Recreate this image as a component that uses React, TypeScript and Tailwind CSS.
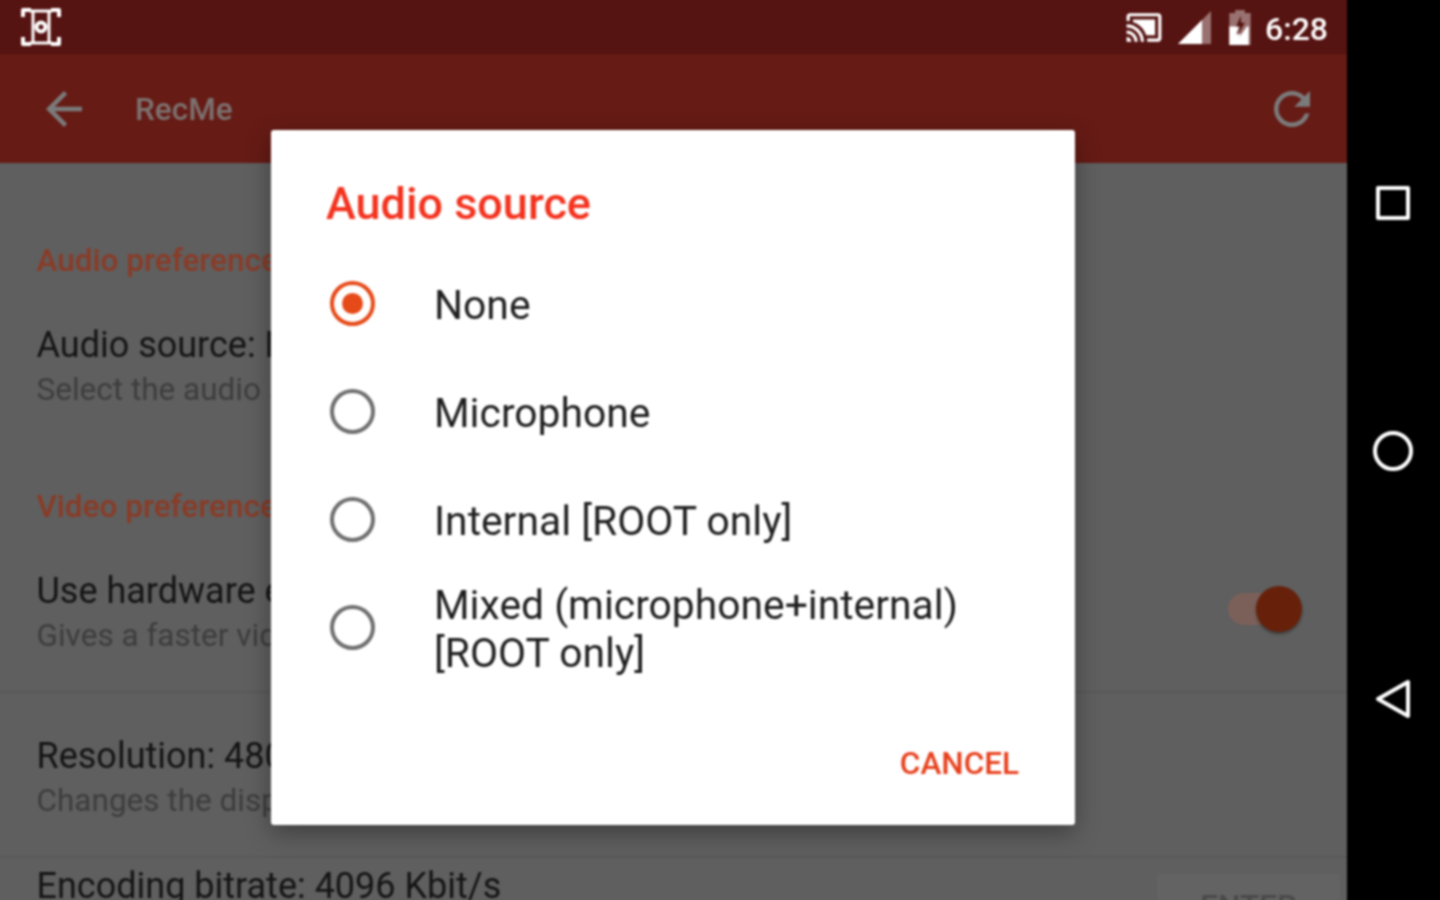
import React from "react";

const M = "font-['Roboto',sans-serif]";

function Radio({ on }: { on?: boolean }) {
  return (
    <span className={`flex h-[45px] w-[45px] shrink-0 items-center justify-center rounded-full border-[4px] ${on ? "border-[#e64a19]" : "border-[#6f6f6f]"}`}>
      {on && <span className="h-[21px] w-[21px] rounded-full bg-[#e64a19]" />}
    </span>
  );
}

function Option({ on, children }: { on?: boolean; children: React.ReactNode }) {
  return (
    <div className="flex h-[108px] items-center pl-[59px]">
      <Radio on={on} />
      <div className="ml-[59px] pt-[3px] text-[40.8px] leading-[48px] text-[#1f1f1f]">{children}</div>
    </div>
  );
}

function Setting({ title, sub, cls }: { title: string; sub: string; cls?: string }) {
  return (
    <div className={cls}>
      <div className="whitespace-nowrap text-[36px] leading-[44px] text-[#141414]">{title}</div>
      <div className="mt-[1px] whitespace-nowrap text-[31.5px] leading-[44px] text-[#3d3d3d]">{sub}</div>
    </div>
  );
}

export default function App() {
  return (
    <div className="h-[900px] w-[1440px] overflow-hidden bg-black">
      <div className={`relative -ml-[4px] -mt-[4px] flex h-[908px] w-[1448px] bg-black blur-[0.9px] ${M}`}>
        <div className="flex w-[1351px] flex-col">
          <div className="flex h-[58px] items-center justify-between bg-[#551311] pl-[23px] pr-[19px] pt-[4px]">
            <svg width="44" height="42" viewBox="0 0 44 42" fill="none" stroke="#fff" strokeWidth="4" strokeLinejoin="round">
              <path d="M4 11V4h8M32 4h8v7M4 31v7h8M32 38h8v-7" />
              <path d="M11 5h22M11 37h22M14 5v32M30 5v32" strokeWidth="3" />
              <circle cx="22" cy="21" r="4.5" strokeWidth="4" />
            </svg>
            <div className="flex items-center">
              <svg width="38" height="34" viewBox="0 0 24 21.5" fill="#fff">
                <path d="M21 2H3C1.900 2 1 2.900 1 4v3h2V4h18v14h-7v2h7c1.100 0 2-.9 2-2V4c0-1.100-.9-2-2-2zM1 17v3h3c0-1.660-1.340-3-3-3zm0-4v2c2.760 0 5 2.240 5 5h2c0-3.870-3.130-7-7-7zm0-4v2c4.970 0 9 4.030 9 9h2c0-6.080-4.930-11-11-11z" />
                <path d="M19 6H5v1.630c3.960 1.280 7.090 4.410 8.370 8.370H19V6z" />
              </svg>
              <svg className="ml-[15px]" width="33" height="33" viewBox="0 0 33 33">
                <path d="M0 33L33 0v33z" fill="#fff" fillOpacity="0.4" />
                <path d="M0 33L24 9v24z" fill="#fff" />
              </svg>
              <svg className="ml-[17px]" width="24" height="35" viewBox="0 0 24 36">
                <path d="M7 0h10v3h6v33H1V3h6z" fill="#fff" fillOpacity="0.4" />
                <path d="M1 17h10l-3 8h5l-3 5 9-13h2v19H1z" fill="#fff" />
                <path d="M13 6l-5 11h4l-2 8 7-12h-4z" fill="#551311" />
              </svg>
              <span className="ml-[13px] pt-[3px] text-[32px] font-medium leading-none text-white">6:28</span>
            </div>
          </div>
          <div className="flex h-[109px] items-center justify-between bg-[#661b15] pl-[41px] pr-[28px] shadow-[0_1px_2px_rgba(0,0,0,0.2)]">
            <div className="flex items-center">
              <svg width="54" height="54" viewBox="0 0 24 24" fill="#7b7b7b">
                <path d="M20 11H7.830l5.590-5.590L12 4l-8 8 8 8 1.410-1.410L7.830 13H20v-2z" />
              </svg>
              <span className="ml-[44px] pt-[3px] text-[31.5px] font-medium text-[#7c7270]">RecMe</span>
            </div>
            <svg width="54" height="54" viewBox="0 0 24 24" fill="#7b7b7b">
              <path d="M17.650 6.350C16.200 4.900 14.210 4 12 4c-4.420 0-7.990 3.580-7.990 8s3.570 8 7.990 8c3.730 0 6.840-2.550 7.730-6h-2.080c-.82 2.330-3.040 4-5.650 4-3.310 0-6-2.690-6-6s2.690-6 6-6c1.660 0 3.140.69 4.220 1.780L13 11h7V4l-2.350 2.350z" />
            </svg>
          </div>
          <div className="flex min-h-0 flex-1 flex-col overflow-hidden bg-[#5f5f5f]">
            <div className="pl-[40.5px] pr-[45px]">
              <div className="mt-[76px] text-[31.5px] font-medium leading-[44px] text-[#8a3b26]">Audio preferences</div>
              <Setting cls="mt-[40px]" title="Audio source: None" sub="Select the audio source" />
              <div className="mt-[73px] text-[31.5px] font-medium leading-[44px] text-[#8a3b26]">Video preferences</div>
              <div className="mt-[40px] flex items-center justify-between">
                <Setting title="Use hardware encoder" sub="Gives a faster video encoding" />
                <div className="relative mb-[10px] flex h-[46px] w-[74px] items-center">
                  <span className="h-[32px] w-[60px] rounded-full bg-[#7b6059]" />
                  <span className="absolute right-0 h-[46px] w-[46px] rounded-full bg-[#67210a] shadow-[0_2px_3px_rgba(0,0,0,0.4)]" />
                </div>
              </div>
            </div>
            <div className="mt-[33px] h-[2px] shrink-0 bg-[#585858]" />
            <Setting cls="mt-[41px] pl-[40.5px]" title="Resolution: 480p" sub="Changes the display resolution" />
            <div className="mt-[33px] h-[2px] shrink-0 bg-[#585858]" />
            <div className="flex items-start justify-between pl-[40.5px] pr-[7px]">
              <div className="mt-[6px] whitespace-nowrap text-[36px] leading-[44px] text-[#141414]">Encoding bitrate: 4096 Kbit/s</div>
              <div className="mt-[16px] flex h-[60px] w-[183px] justify-center rounded-[3px] bg-[#636363] pt-[17px] text-[31.5px] font-medium leading-none text-[#4a4a4a]">ENTER</div>
            </div>
          </div>
        </div>

        <div className="flex w-[97px] flex-col items-center pr-[4px]">
          <span className="ml-[-1px] mt-[190px] h-[34px] w-[34px] rounded-[2px] border-[4px] border-white" />
          <span className="ml-[-1px] mt-[211px] h-[40px] w-[40px] rounded-full border-[4px] border-white" />
          <svg className="ml-[-1px] mt-[208px]" width="36" height="40" viewBox="0 0 36 40" fill="none" stroke="#fff" strokeWidth="4" strokeLinejoin="round">
            <path d="M3 20L33 3v34z" />
          </svg>
        </div>

        <div className="absolute left-[275px] top-[134px] flex h-[695px] w-[804px] flex-col rounded-[3px] bg-white shadow-[0_8px_24px_rgba(0,0,0,0.35)]">
          <div className="ml-[55px] mt-[46px] h-[73px] text-[45px] font-medium leading-[56px] text-[#f4331f]">Audio source</div>
          <Option on>None</Option>
          <Option>Microphone</Option>
          <Option>Internal [ROOT only]</Option>
          <Option>
            Mixed (microphone+internal)
            <br />
            [ROOT only]
          </Option>
          <div className="mr-[56px] mt-[65px] self-end text-[31.5px] font-medium leading-[36px] text-[#e8401c]">CANCEL</div>
        </div>
      </div>
    </div>
  );
}
